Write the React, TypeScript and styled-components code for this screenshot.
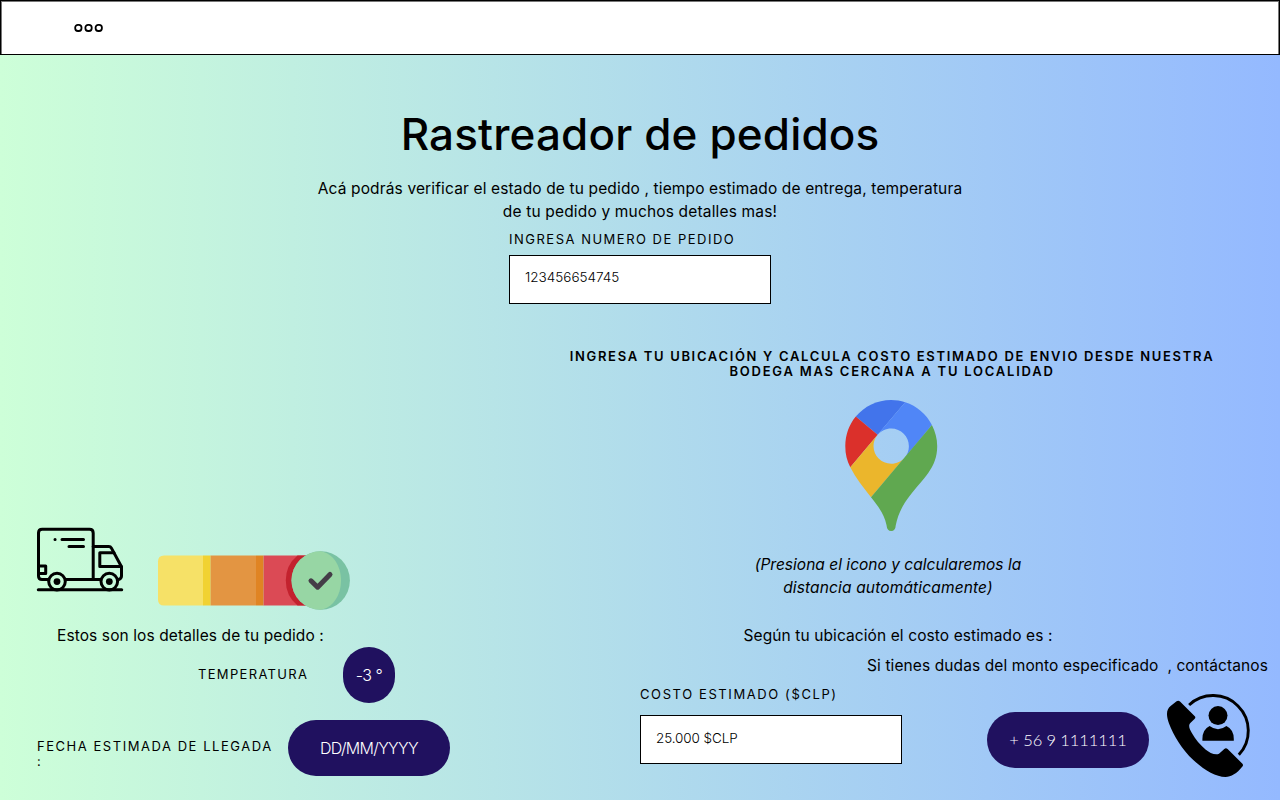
import React from 'react';
import styled, { createGlobalStyle } from 'styled-components';

const GlobalStyle = createGlobalStyle`
  *, *::before, *::after { box-sizing: border-box; }
  body {
    margin: 0;
    color: #000;
    font-family: Inter, "Liberation Sans", sans-serif;
  }
`;

const Page = styled.div`
  display: flex;
  flex-direction: column;
  width: 1280px;
  height: 800px;
  overflow: hidden;
  background: linear-gradient(90deg, #cdffd8, #94b9ff);
`;

const TopBar = styled.header`
  display: flex;
  align-items: center;
  flex: none;
  height: 55px;
  padding-left: 73px;
  background: #fff;
  border: 1px solid #000;
  box-shadow: inset 1px 1px 0 #777, inset -1px 0 0 #777;
`;

const MenuButton = styled.button`
  display: flex;
  padding: 0;
  border: 0;
  background: none;
`;

const Hero = styled.section`
  display: flex;
  flex-direction: column;
  align-items: center;
  flex: none;
  height: 249px;
`;

const Title = styled.h1`
  margin: 49px 0 0;
  font-size: 44px;
  font-weight: 500;
  line-height: 60px;
  letter-spacing: 0.15px;
`;

const Text = styled.p<{ $tracking?: number; $italic?: boolean; $top?: number }>`
  margin: ${({ $top = 0 }) => $top}px 0 0;
  font-size: 15.5px;
  line-height: 23px;
  font-style: ${({ $italic }) => ($italic ? 'italic' : 'normal')};
  letter-spacing: ${({ $tracking = 0.1 }) => $tracking}px;
  white-space: pre;
`;

const Label = styled.label<{ $tracking?: number }>`
  display: block;
  font-size: 13px;
  line-height: 15px;
  letter-spacing: ${({ $tracking = 1.5 }) => $tracking}px;
  text-transform: uppercase;
`;

const Field = styled.div`
  width: 262px;
`;

const Input = styled.input<{ $tracking?: number; $lift?: number }>`
  display: block;
  width: 262px;
  height: 49px;
  margin: 0;
  padding: 0 15px ${({ $lift = 4 }) => $lift}px;
  border: 1px solid #000;
  border-radius: 0;
  background: #fff;
  color: #000;
  font-family: inherit;
  font-size: 13.5px;
  font-weight: 300;
  letter-spacing: ${({ $tracking = 0 }) => $tracking}px;
`;

const Columns = styled.main`
  display: grid;
  grid-template-columns: 504px 776px;
  flex: 1;
`;

const OrderPanel = styled.section`
  padding-left: 37px;
`;

const StatusRow = styled.div`
  display: flex;
  align-items: flex-end;
  gap: 34px;
  height: 83px;
  margin-top: 223px;
`;

const TruckSlot = styled.div`
  height: 83px;
`;

const OrderCaption = styled.div`
  margin-top: 14px;
  padding-left: 20px;
`;

const Detail = styled.div<{ $top: number; $indent: number; $gap: number }>`
  display: flex;
  align-items: center;
  gap: ${({ $gap }) => $gap}px;
  height: 56px;
  margin-top: ${({ $top }) => $top}px;
  padding-left: ${({ $indent }) => $indent}px;
`;

const TemperatureLabel = styled.div`
  width: 112px;
  padding-bottom: 2px;
`;

const DateLabel = styled.div`
  width: 239px;
  padding-top: 12px;
`;

const Pill = styled.div<{ $width: number; $tracking: number; $phone?: boolean }>`
  display: flex;
  align-items: center;
  justify-content: center;
  flex: none;
  width: ${({ $width }) => $width}px;
  height: 56px;
  border-radius: 28px;
  background: #20115f;
  color: #fff;
  font-family: ${({ $phone }) => ($phone ? 'Lato' : 'Inter')}, sans-serif;
  font-size: ${({ $phone }) => ($phone ? 16.5 : 16)}px;
  font-weight: 300;
  letter-spacing: ${({ $tracking }) => $tracking}px;
  white-space: pre;
`;

const CostPanel = styled.section`
  display: flex;
  flex-direction: column;
  align-items: center;
`;

const Heading = styled.h2`
  margin: 45px 0 0;
  font-size: 13px;
  font-weight: 600;
  line-height: 15px;
  letter-spacing: 1.67px;
  text-align: center;
  text-transform: uppercase;
  white-space: nowrap;
`;

const HeadingEnd = styled.span`
  letter-spacing: 1.77px;
`;

const PinButton = styled.button`
  display: block;
  height: 132px;
  margin: 21px 2px 0 0;
  padding: 0;
  border: 0;
  background: none;
`;

const Hint = styled.div`
  padding-right: 8px;
  margin-top: 21px;
  text-align: center;
`;

const CostCaption = styled.div`
  padding-left: 12px;
  margin-top: 25px;
`;

const HelpCaption = styled.div`
  align-self: flex-end;
  margin-top: 7px;
  padding-right: 12px;
`;

const ContactRow = styled.div`
  display: flex;
  align-self: stretch;
  align-items: flex-start;
  padding: 10px 30px 0 136px;
`;

const PillSlot = styled.div`
  margin: 25px 18px 0 85px;
`;

const PhoneSlot = styled.div`
  padding-top: 7px;
`;

const FieldGap = styled.div<{ $size: number }>`
  height: ${({ $size }) => $size}px;
`;

const Svg = styled.svg`
  display: block;
  overflow: visible;
`;

const DotsIcon = () => (
  <Svg width="30" height="8" fill="none" stroke="#000" strokeWidth="1.8">
    <rect x="1.2" y=".8" width="6.3" height="6.2" rx="2.7" />
    <rect x="11.4" y=".8" width="6.3" height="6.2" rx="2.7" />
    <rect x="21.6" y=".8" width="6.3" height="6.2" rx="2.7" />
  </Svg>
);

const TruckIcon = () => (
  <Svg width="87" height="65" fill="none" stroke="#000" strokeWidth="3" strokeLinecap="round" strokeLinejoin="round">
    <path d="M11 52.5H5Q1.5 52.5 1.5 49V6Q1.5 2.3 5.2 2.3H52.5Q56.2 2.3 56.2 6V52.3" />
    <path d="M29 52.4H63.5M56.2 19.4H71.8Q73.5 19.4 74.3 20.9L84.5 39.8V49Q84.5 51.3 82 52.4" />
    <path d="M84.3 39.6H62.8V25.8H77" />
    <path d="M1.5 39H8.7V46.5H1.5" />
    <path d="M25 12.4H46.5M32 19.4H46.5M18 12.4h.1" />
    <path d="M1.3 62.8H84.7" />
    <circle cx="20" cy="54.6" r="8.3" />
    <circle cx="72.3" cy="54.6" r="8.3" />
    <circle cx="20" cy="54.6" r="3.4" fill="#000" stroke="none" />
    <circle cx="72.3" cy="54.6" r="3.4" fill="#000" stroke="none" />
  </Svg>
);

const GaugeIcon = () => (
  <Svg width="192" height="59">
    <path d="M45.2 4.5H6Q0 4.5 0 10.5V48.5Q0 54.5 6 54.5H45.2Z" fill="#f6e167" />
    <path d="M45 4.5H52.6V54.5H45Z" fill="#f1d232" />
    <path d="M52.6 4.5H98V54.5H52.6Z" fill="#e39542" />
    <path d="M98 4.5H105.6V54.5H98Z" fill="#e08423" />
    <path d="M105.6 4.5H160V54.5H105.6Z" fill="#db4a55" />
    <path d="M139.5 4.5Q127.8 14 127.8 29.5T139.5 54.5H160V4.5Z" fill="#c3222e" />
    <circle cx="162.7" cy="29.5" r="29.2" fill="#79c2a3" />
    <path d="M162.7 .3A29.2 29.2 0 0 0 162.7 58.7C174.5 57 183 44.5 183 29.5S174.5 2 162.7 .3Z" fill="#97d6a4" />
    <path d="M153 29.8L159.6 36.2L172 23.5" fill="none" stroke="#443d47" strokeWidth="5" strokeLinecap="round" strokeLinejoin="round" />
  </Svg>
);

const MapPinIcon = () => (
  <Svg width="93" height="132">
    <path fill="#4274eb" d="M60.2 2.2C55.8.8 51 0 46.1 0 32 0 19.3 6.4 10.8 16.5l21.8 18.3L60.2 2.2z" />
    <path fill="#db302b" d="M10.8 16.5C4.1 24.5.3 34.9.3 46.1c0 8.3 1.6 14.7 5 21.2l27.3-32.5-21.8-18.3z" />
    <path fill="#5086f7" d="M46.2 28.5c9.8 0 17.7 7.9 17.7 17.7 0 4.3-1.6 8.3-4.2 11.4 0 0 13.9-16.6 27.2-32.7-5.6-10.8-15-19-26.7-22.7L32.6 34.8c3.3-3.8 8.1-6.3 13.6-6.3" />
    <path fill="#ebb62c" d="M46.2 63.8c-9.8 0-17.7-7.9-17.7-17.7 0-4.3 1.5-8.3 4.1-11.3L5.3 67.3C10.6 78 18.2 87.2 26 97.3l33.7-39.8c-3.3 3.9-8.1 6.3-13.5 6.3" />
    <path fill="#60a850" d="M86.9 24.9L26 97.3C33.6 106.7 39.5 115 41.5 125Q42 131.1 46.2 131.1T50.8 125C53.2 113.5 58 104.5 65 95.5 78 78.5 92.2 68 92.2 46.2 92.2 38.5 90.2 31.3 86.9 24.9Z" />
  </Svg>
);

const CallAgentIcon = () => (
  <Svg width="83" height="83">
    <path d="M22.1 11A35.2 35.2 0 0 1 71.8 60.8" fill="none" stroke="#000" strokeWidth="2.9" />
    <circle cx="51" cy="21.6" r="9.5" />
    <path d="M42.6 32Q51 38.4 59.4 32Q66.8 35.5 66.8 45V46.8H35.4V45Q35.4 35.5 42.6 32Z" />
    <path d="M9.6 7.3Q11.4 6 13 7.6L27.8 22.3Q29 23.7 27.5 25L23.6 28.7C20.8 31.5 22.6 35.3 25 39.3C28.5 45.3 33 51 38.5 55.5C42.5 58.8 48.5 61.7 52 59.7L57.3 55Q59 53.6 60.6 55.1L75.2 69.5Q76.8 71.1 75.2 72.8C70 79.5 64 83 58.5 83C48.5 83 36.5 75.5 26.3 66C15 55.5 6.5 41.5 2 29.5C-1.2 20.5-.5 15.5 3.6 12Z" />
  </Svg>
);

export default function App() {
  return (
    <Page>
      <GlobalStyle />
      <TopBar>
        <MenuButton aria-label="Menú"><DotsIcon /></MenuButton>
      </TopBar>
      <Hero>
        <Title>Rastreador de pedidos</Title>
        <Text $top={13} $tracking={0.14}>Acá podrás verificar el estado de tu pedido , tiempo estimado de entrega, temperatura</Text>
        <Text $tracking={0.17}>de tu pedido y muchos detalles mas!</Text>
        <FieldGap $size={9} />
        <Field>
          <Label htmlFor="pedido">Ingresa numero de pedido</Label>
          <FieldGap $size={8} />
          <Input id="pedido" defaultValue="123456654745" $lift={6} />
        </Field>
      </Hero>
      <Columns>
        <OrderPanel>
          <StatusRow>
            <TruckSlot><TruckIcon /></TruckSlot>
            <GaugeIcon />
          </StatusRow>
          <OrderCaption>
            <Text>Estos son los detalles de tu pedido :</Text>
          </OrderCaption>
          <Detail $top={0} $indent={161} $gap={33}>
            <TemperatureLabel><Label $tracking={1.33}>Temperatura</Label></TemperatureLabel>
            <Pill $width={52} $tracking={-0.5}>-3 °</Pill>
          </Detail>
          <Detail $top={17} $indent={0} $gap={12}>
            <DateLabel><Label $tracking={1.54}>Fecha estimada de llegada :</Label></DateLabel>
            <Pill $width={162} $tracking={-0.7}>DD/MM/YYYY</Pill>
          </Detail>
        </OrderPanel>
        <CostPanel>
          <Heading>
            Ingresa tu ubicación y calcula costo estimado de envio desde nuestra<br />
            <HeadingEnd>bodega mas cercana a tu localidad</HeadingEnd>
          </Heading>
          <PinButton aria-label="Calcular distancia"><MapPinIcon /></PinButton>
          <Hint>
            <Text $italic $tracking={0.02}>(Presiona el icono y calcularemos la</Text>
            <Text $italic $tracking={0.15}>distancia automáticamente)</Text>
          </Hint>
          <CostCaption><Text>Según tu ubicación el costo estimado es :</Text></CostCaption>
          <HelpCaption><Text>Si tienes dudas del monto especificado  , contáctanos</Text></HelpCaption>
          <ContactRow>
            <Field>
              <Label htmlFor="costo" $tracking={1.6}>Costo estimado ($CLP)</Label>
              <FieldGap $size={13} />
              <Input id="costo" defaultValue="25.000 $CLP" $tracking={-0.1} />
            </Field>
            <PillSlot><Pill $phone $width={162} $tracking={-0.1}>+ 56 9 1111111</Pill></PillSlot>
            <PhoneSlot><CallAgentIcon /></PhoneSlot>
          </ContactRow>
        </CostPanel>
      </Columns>
    </Page>
  );
}
